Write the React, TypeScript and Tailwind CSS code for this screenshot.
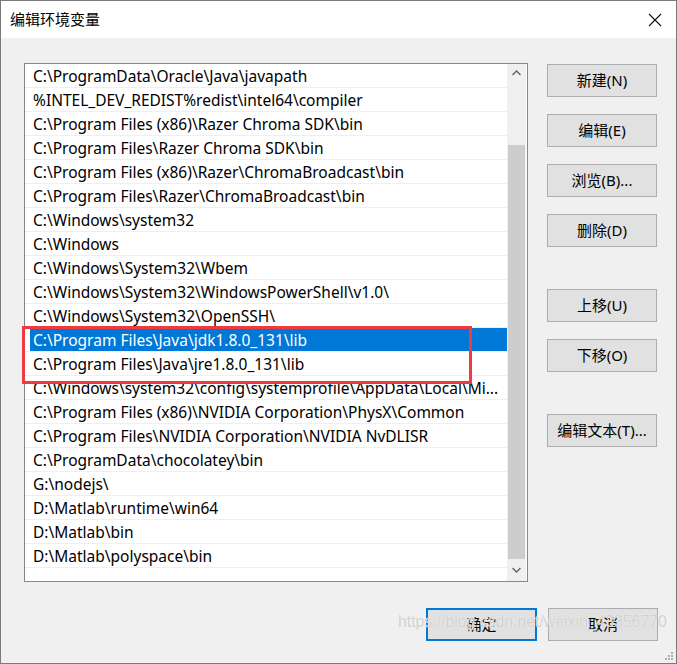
import React from "react";

const rows = [
  "C:\\ProgramData\\Oracle\\Java\\javapath",
  "%INTEL_DEV_REDIST%redist\\intel64\\compiler",
  "C:\\Program Files (x86)\\Razer Chroma SDK\\bin",
  "C:\\Program Files\\Razer Chroma SDK\\bin",
  "C:\\Program Files (x86)\\Razer\\ChromaBroadcast\\bin",
  "C:\\Program Files\\Razer\\ChromaBroadcast\\bin",
  "C:\\Windows\\system32",
  "C:\\Windows",
  "C:\\Windows\\System32\\Wbem",
  "C:\\Windows\\System32\\WindowsPowerShell\\v1.0\\",
  "C:\\Windows\\System32\\OpenSSH\\",
  "C:\\Program Files\\Java\\jdk1.8.0_131\\lib",
  "C:\\Program Files\\Java\\jre1.8.0_131\\lib",
  "C:\\Windows\\system32\\config\\systemprofile\\AppData\\Local\\Mi...",
  "C:\\Program Files (x86)\\NVIDIA Corporation\\PhysX\\Common",
  "C:\\Program Files\\NVIDIA Corporation\\NVIDIA NvDLISR",
  "C:\\ProgramData\\chocolatey\\bin",
  "G:\\nodejs\\",
  "D:\\Matlab\\runtime\\win64",
  "D:\\Matlab\\bin",
  "D:\\Matlab\\polyspace\\bin",
];

function Btn({ label, cls = "" }: { label: string; cls?: string }) {
  return (
    <div
      className={
        "w-[110px] h-[33px] bg-[#e1e1e1] border border-[#adadad] flex items-center justify-center text-[15px] text-black " +
        cls
      }
    >
      {label}
    </div>
  );
}

export default function App() {
  return (
    <div
      className="relative w-[677px] h-[664px] bg-[#f0f0f0] border border-[#7a7a7a] overflow-hidden"
      style={{ fontFamily: '"Noto Sans", "Noto Sans CJK SC", sans-serif' }}
    >
      {/* title bar */}
      <div className="h-[37px] bg-white flex items-center justify-between pl-[9px] pr-[14px]">
        <span className="text-[15px] text-black" style={{ fontFamily: '"Noto Sans CJK SC", sans-serif' }}>
          编辑环境变量
        </span>
        <svg width="14" height="14" viewBox="0 0 14 14">
          <path d="M1 1 L13 13 M13 1 L1 13" stroke="#111" strokeWidth="1.1" fill="none" />
        </svg>
      </div>

      <div className="flex pt-[25px] pl-[23px]">
        {/* list */}
        <div className="w-[504px] h-[519px] border border-[#828790] bg-white flex">
          <div className="flex-1 flex flex-col">
            {rows.map((r, i) => (
              <div key={i} className="h-[24px] border-b border-[#efefef] flex items-stretch">
                <div
                  className={
                    "flex-1 ml-[5px] flex items-center pl-[3px] pt-[2px] text-[15.5px] whitespace-nowrap overflow-hidden " +
                    (i === 11 ? "bg-[#0078d7] text-white" : "text-black")
                  }
                >
                  {r}
                </div>
              </div>
            ))}
          </div>
          <div className="w-[19px] mr-[1px] bg-[#f0f0f0] flex flex-col">
            <div className="h-[17px] flex items-center justify-center">
              <svg width="9" height="6" viewBox="0 0 9 6">
                <path d="M0.5 5 L4.5 1 L8.5 5" stroke="#606060" strokeWidth="1.3" fill="none" />
              </svg>
            </div>
            <div className="h-[64px]" />
            <div className="h-[414px] mx-[1px] bg-[#cdcdcd]" />
            <div className="flex-1 flex items-center justify-center">
              <svg width="9" height="6" viewBox="0 0 9 6">
                <path d="M0.5 1 L4.5 5 L8.5 1" stroke="#606060" strokeWidth="1.3" fill="none" />
              </svg>
            </div>
          </div>
        </div>

        {/* right buttons */}
        <div className="ml-[19px] pt-[1px] flex flex-col">
          <Btn label="新建(N)" />
          <Btn label="编辑(E)" cls="mt-[17px]" />
          <Btn label="浏览(B)..." cls="mt-[17px]" />
          <Btn label="删除(D)" cls="mt-[17px]" />
          <Btn label="上移(U)" cls="mt-[42px]" />
          <Btn label="下移(O)" cls="mt-[17px]" />
          <Btn label="编辑文本(T)..." cls="mt-[42px]" />
        </div>
      </div>

      {/* bottom buttons */}
      <div className="flex justify-end gap-[11px] pr-[18px] mt-[26px]">
        <div className="w-[111px] h-[33px] bg-[#e1e1e1] border-2 border-[#0078d7] flex items-center justify-center text-[15px] text-black">
          确定
        </div>
        <Btn label="取消" />
      </div>

      {/* red annotation box */}
      <div className="absolute left-[21px] top-[325px] w-[450px] h-[58px] border-[3px] border-[#ef3b3f] pointer-events-none" />

      {/* watermark */}
      <div
        className="absolute left-[397px] top-[609px] text-[15.8px] text-[#d0d0d0] whitespace-nowrap pointer-events-none"
        style={{ fontFamily: '"Liberation Sans", Arial, sans-serif', textShadow: "0 0 1px #ffffff" }}
      >
        https://blog.csdn.net/weixin_43356770
      </div>

      {/* resize grip */}
      <svg className="absolute right-[2px] bottom-[2px]" width="10" height="10" viewBox="0 0 10 10">
        <rect x="7" y="1" width="2" height="2" fill="#b0b0b0" />
        <rect x="4" y="4" width="2" height="2" fill="#b0b0b0" />
        <rect x="7" y="4" width="2" height="2" fill="#b0b0b0" />
        <rect x="1" y="7" width="2" height="2" fill="#b0b0b0" />
        <rect x="4" y="7" width="2" height="2" fill="#b0b0b0" />
        <rect x="7" y="7" width="2" height="2" fill="#b0b0b0" />
      </svg>
    </div>
  );
}
